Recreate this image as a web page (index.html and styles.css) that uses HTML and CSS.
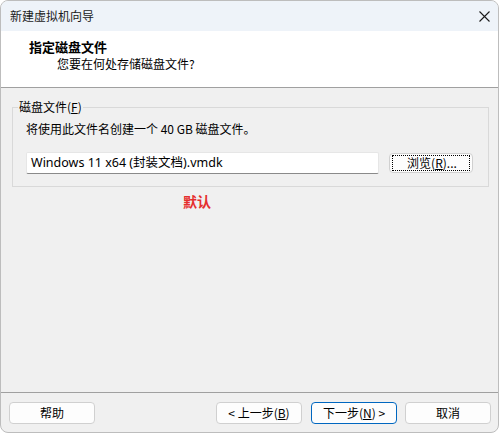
FILE: index.html
```html
<!DOCTYPE html>
<html lang="zh-CN">
<head>
<meta charset="utf-8">
<title>新建虚拟机向导</title>
<link rel="stylesheet" href="styles.css">
</head>
<body>
<div class="window">
  <div class="titlebar">
    <span class="title">新建虚拟机向导</span>
    <span class="close">
      <svg width="11" height="11" viewBox="0 0 11 11"><path d="M0.5 0.5 L10.5 10.5 M10.5 0.5 L0.5 10.5" stroke="#1b1b1b" stroke-width="1.1" fill="none"/></svg>
    </span>
  </div>
  <div class="header">
    <div class="h-title">指定磁盘文件</div>
    <div class="h-sub">您要在何处存储磁盘文件?</div>
  </div>
  <div class="content">
    <fieldset class="group">
      <legend>磁盘文件(<u>F</u>)</legend>
      <div class="desc">将使用此文件名创建一个 40 GB 磁盘文件。</div>
      <div class="row">
        <div class="input">Windows 11 x64 (封装文档).vmdk</div>
        <button class="btn browse"><span class="focus">浏览(<u>R</u>)...</span></button>
      </div>
    </fieldset>
    <div class="note">默认</div>
  </div>
  <div class="footer">
    <button class="btn">帮助</button>
    <div class="spacer"></div>
    <button class="btn">&lt; 上一步(<u>B</u>)</button>
    <button class="btn primary">下一步(<u>N</u>) &gt;</button>
    <button class="btn">取消</button>
  </div>
</div>
</body>
</html>
```
FILE: styles.css
```css
* { box-sizing: border-box; }

html, body {
  margin: 0;
  padding: 0;
  background: #ffffff;
}

body {
  font-family: "Noto Sans CJK SC", "Noto Sans", sans-serif;
  font-size: 12px;
  color: #1a1a1a;
}

.window {
  width: 499px;
  height: 433px;
  display: flex;
  flex-direction: column;
  border: 1px solid #bdbdbd;
  border-radius: 8px;
  overflow: hidden;
  background: #f0f0f0;
}

.titlebar {
  height: 30px;
  flex: none;
  background: #eef3f9;
  display: flex;
  align-items: center;
  padding: 0 8px 0 9px;
}

.title {
  flex: 1;
  font-size: 12px;
  line-height: 16px;
  color: #1a1a1a;
}

.close {
  flex: none;
  display: flex;
  align-items: center;
  justify-content: center;
}

.close svg { display: block; }

.header {
  height: 57px;
  flex: none;
  background: #ffffff;
  border-bottom: 1px solid #a0a0a0;
  padding: 8px 0 0 28px;
}

.h-title {
  font-weight: bold;
  font-size: 13px;
  line-height: 16px;
  color: #000;
}

.h-sub {
  margin-top: 1px;
  padding-left: 28px;
  line-height: 16px;
  color: #000;
}

.content {
  flex: 1;
  padding: 11px 9px 0 11px;
}

.group {
  margin: 0;
  padding: 6px 15px 12px 13px;
  border: 1px solid #d9d9d9;
  border-radius: 0;
  min-width: 0;
}

.group legend {
  padding: 0 1px;
  margin-left: -8px;
  line-height: 16px;
  color: #000;
}

.group legend u, .btn u { text-decoration: underline; text-underline-offset: 1px; }

.desc {
  line-height: 16px;
  color: #000;
}

.row {
  margin-top: 15px;
  display: flex;
  align-items: center;
  gap: 10px;
}

.input {
  width: 353px;
  height: 22px;
  background: #ffffff;
  border: 1px solid #e6e6e6;
  border-bottom: 1px solid #8a8a8a;
  border-radius: 2px;
  padding: 0 0 0 4px;
  font-family: "Noto Sans", "Noto Sans CJK SC", sans-serif;
  font-size: 12.5px;
  line-height: 20px;
  color: #000;
  white-space: nowrap;
}

.btn {
  height: 22px;
  width: 86px;
  background: #fdfdfd;
  border: 1px solid #d0d0d0;
  border-radius: 4px;
  font-family: inherit;
  font-size: 12px;
  color: #000;
  padding: 0;
  line-height: 18px;
}

.browse {
  width: 84px;
  height: 20px;
  padding: 1px 2px;
  display: flex;
}

.browse .focus {
  flex: 1;
  border: 1px dotted #000;
  line-height: 14px;
  display: flex;
  align-items: center;
  justify-content: center;
  padding-left: 2px;
}

.note {
  margin: 5px 0 0 171px;
  font-weight: bold;
  font-size: 14px;
  line-height: 18px;
  color: #e52d2d;
}

.footer {
  height: 40px;
  flex: none;
  border-top: 1px solid #a0a0a0;
  display: flex;
  align-items: flex-start;
  padding: 9px 7px 0 8px;
  gap: 9px;
}

.footer .spacer { flex: 1; }

.footer .btn.primary {
  border-color: #0067c0;
  margin-right: -1px;
}
```
